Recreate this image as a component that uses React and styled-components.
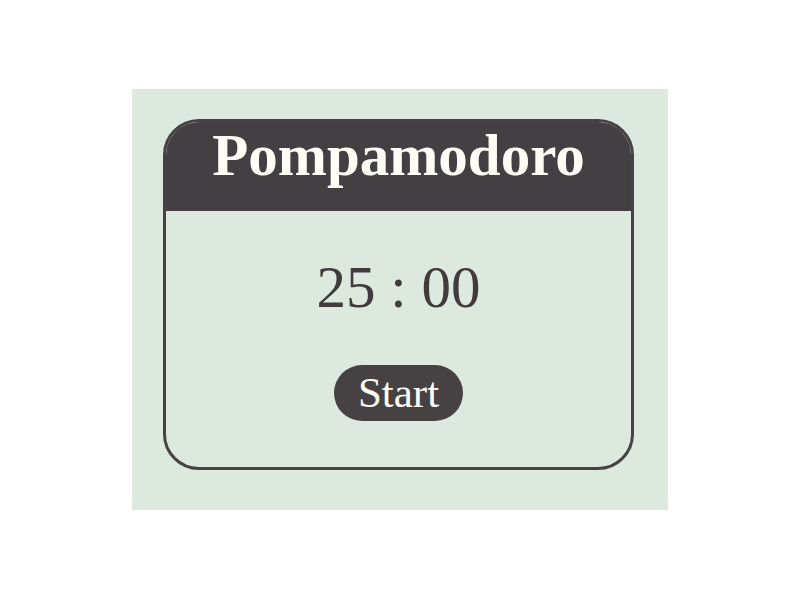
import React from "react";
import styled, { createGlobalStyle } from "styled-components";

const GlobalStyle = createGlobalStyle`
  body {
    margin: 0;
    background: #ffffff;
    font-family: "Liberation Serif", "Times New Roman", serif;
  }
`;

const Page = styled.div`
  width: 536px;
  height: 421px;
  margin: 89px auto 0;
  box-sizing: border-box;
  padding: 30px 34px 0 31px;
  background: #dde9de;
`;

const Card = styled.div`
  width: 471px;
  height: 351px;
  box-sizing: border-box;
  border: 3px solid #454144;
  border-radius: 36px;
  overflow: hidden;
  display: flex;
  flex-direction: column;
`;

const Header = styled.div`
  height: 89px;
  background: #443f42;
  display: flex;
  justify-content: center;
  align-items: flex-start;
`;

const Title = styled.h1`
  margin: 0;
  font-size: 59px;
  line-height: 66px;
  font-weight: bold;
  color: #fdfdf6;
`;

const Body = styled.div`
  flex: 1;
  display: flex;
  flex-direction: column;
  align-items: center;
  padding-top: 43px;
`;

const Timer = styled.div`
  font-size: 59px;
  line-height: 66px;
  color: #3f3b3e;
`;

const StartButton = styled.button`
  margin-top: 45px;
  width: 129px;
  height: 56px;
  padding: 0;
  border: none;
  border-radius: 28px;
  background: #464244;
  color: #fdfdf6;
  font-family: "Liberation Serif", "Times New Roman", serif;
  font-size: 43px;
  line-height: 56px;
  cursor: pointer;
`;

const App = () => {
  return (
    <>
      <GlobalStyle />
      <Page>
        <Card>
          <Header>
            <Title>Pompamodoro</Title>
          </Header>
          <Body>
            <Timer>25 : 00</Timer>
            <StartButton>Start</StartButton>
          </Body>
        </Card>
      </Page>
    </>
  );
};

export default App;
